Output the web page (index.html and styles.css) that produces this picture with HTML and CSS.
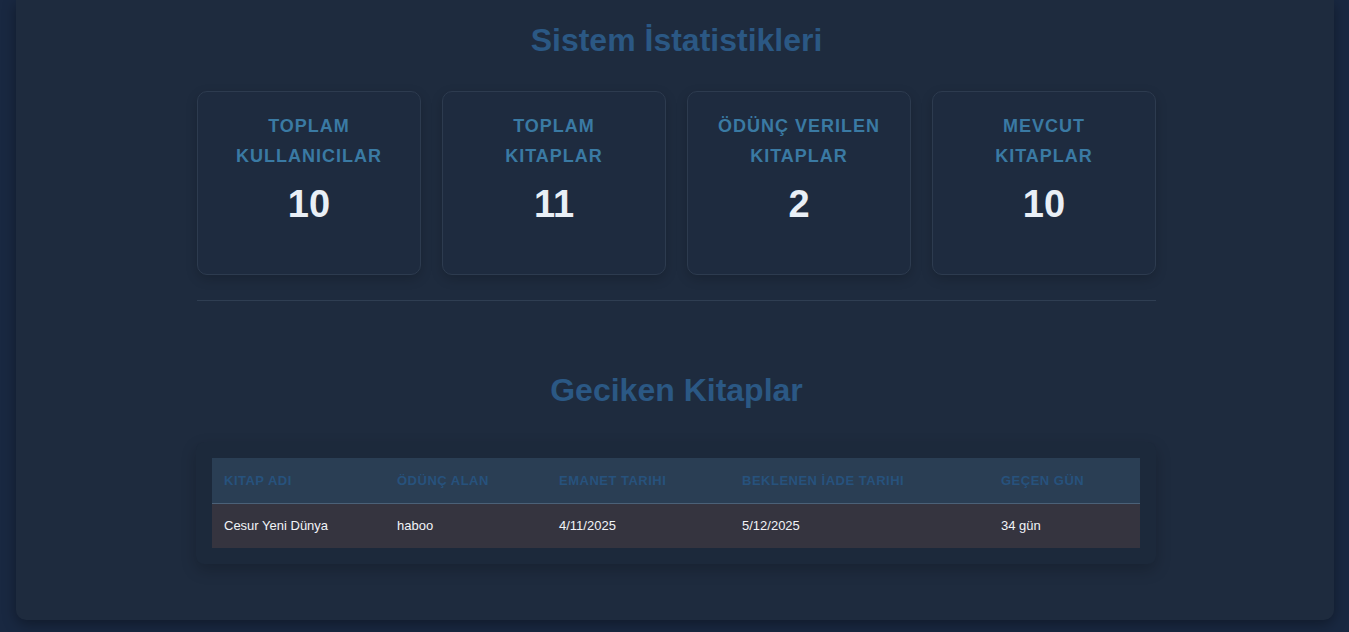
FILE: index.html
```html
<!DOCTYPE html>
<html lang="tr">
<head>
<meta charset="utf-8">
<title>Sistem İstatistikleri</title>
<link rel="stylesheet" href="styles.css">
</head>
<body>
<main class="panel">
  <section class="stats">
    <h2 class="section-title">Sistem İstatistikleri</h2>
    <div class="cards">
      <div class="card">
        <div class="card-label">TOPLAM KULLANICILAR</div>
        <div class="card-value">10</div>
      </div>
      <div class="card">
        <div class="card-label">TOPLAM KITAPLAR</div>
        <div class="card-value">11</div>
      </div>
      <div class="card">
        <div class="card-label">ÖDÜNÇ VERILEN KITAPLAR</div>
        <div class="card-value">2</div>
      </div>
      <div class="card">
        <div class="card-label">MEVCUT KITAPLAR</div>
        <div class="card-value">10</div>
      </div>
    </div>
    <hr class="divider">
  </section>
  <section class="overdue">
    <h2 class="section-title">Geciken Kitaplar</h2>
    <div class="table-wrap">
      <table class="table">
        <thead>
          <tr>
            <th class="c1">KITAP ADI</th>
            <th class="c2">ÖDÜNÇ ALAN</th>
            <th class="c3">EMANET TARIHI</th>
            <th class="c4">BEKLENEN İADE TARIHI</th>
            <th class="c5">GEÇEN GÜN</th>
          </tr>
        </thead>
        <tbody>
          <tr>
            <td>Cesur Yeni Dünya</td>
            <td>haboo</td>
            <td>4/11/2025</td>
            <td>5/12/2025</td>
            <td>34 gün</td>
          </tr>
        </tbody>
      </table>
    </div>
  </section>
</main>
</body>
</html>
```

FILE: styles.css
```css
* { box-sizing: border-box; }

html, body {
  margin: 0;
  padding: 0;
}

body {
  background: #192841;
  font-family: "Liberation Sans", Arial, sans-serif;
  color: #e8eef5;
  height: 632px;
  overflow: hidden;
}

.panel {
  margin: 0 15px 0 16px;
  height: 620px;
  background: #1e2b3e;
  border-radius: 0 0 10px 10px;
  box-shadow: 0 4px 14px rgba(0, 0, 0, 0.35);
  padding: 22px 178px 0 181px;
}

.section-title {
  margin: 0;
  text-align: center;
  font-size: 32px;
  line-height: 37px;
  font-weight: 700;
  color: #2b5884;
}

.cards {
  display: grid;
  grid-template-columns: repeat(4, 1fr);
  column-gap: 21px;
  margin-top: 32px;
}

.card {
  background: #1e2b3f;
  border: 1px solid #2d3b4f;
  border-radius: 10px;
  box-shadow: 0 4px 12px rgba(0, 0, 0, 0.18);
  padding: 19px 20px 0;
  height: 184px;
  text-align: center;
}

.card-label {
  font-size: 18px;
  line-height: 30px;
  font-weight: 700;
  letter-spacing: 1px;
  color: #3a7aa3;
}

.card-value {
  margin-top: 10px;
  font-size: 38px;
  line-height: 46px;
  font-weight: 700;
  color: #e9eff6;
}

.divider {
  margin: 25px 0 0;
  border: 0;
  border-top: 1px solid #2f3e52;
  height: 0;
}

.overdue {
  padding-top: 71px;
}

.table-wrap {
  margin: 33px 0 0 -1px;
  background: #1c293b;
  border-radius: 8px;
  padding: 16px;
  box-shadow: 0 6px 16px rgba(0, 0, 0, 0.2);
}

.table {
  width: 100%;
  border-collapse: collapse;
  font-size: 13px;
}

.table th {
  text-align: left;
  font-weight: 700;
  color: #27527d;
  background: #2a3e54;
  padding: 15px 12px 15px;
  line-height: 15px;
  border-bottom: 1px solid #4b6178;
  letter-spacing: 0.5px;
}

.table td {
  background: #35343f;
  color: #f1f3f7;
  padding: 14px 12px 15px;
  line-height: 15px;
}

.c1 { width: 173px; }
.c2 { width: 162px; }
.c3 { width: 183px; }
.c4 { width: 259px; }
.c5 { width: 151px; }
```
